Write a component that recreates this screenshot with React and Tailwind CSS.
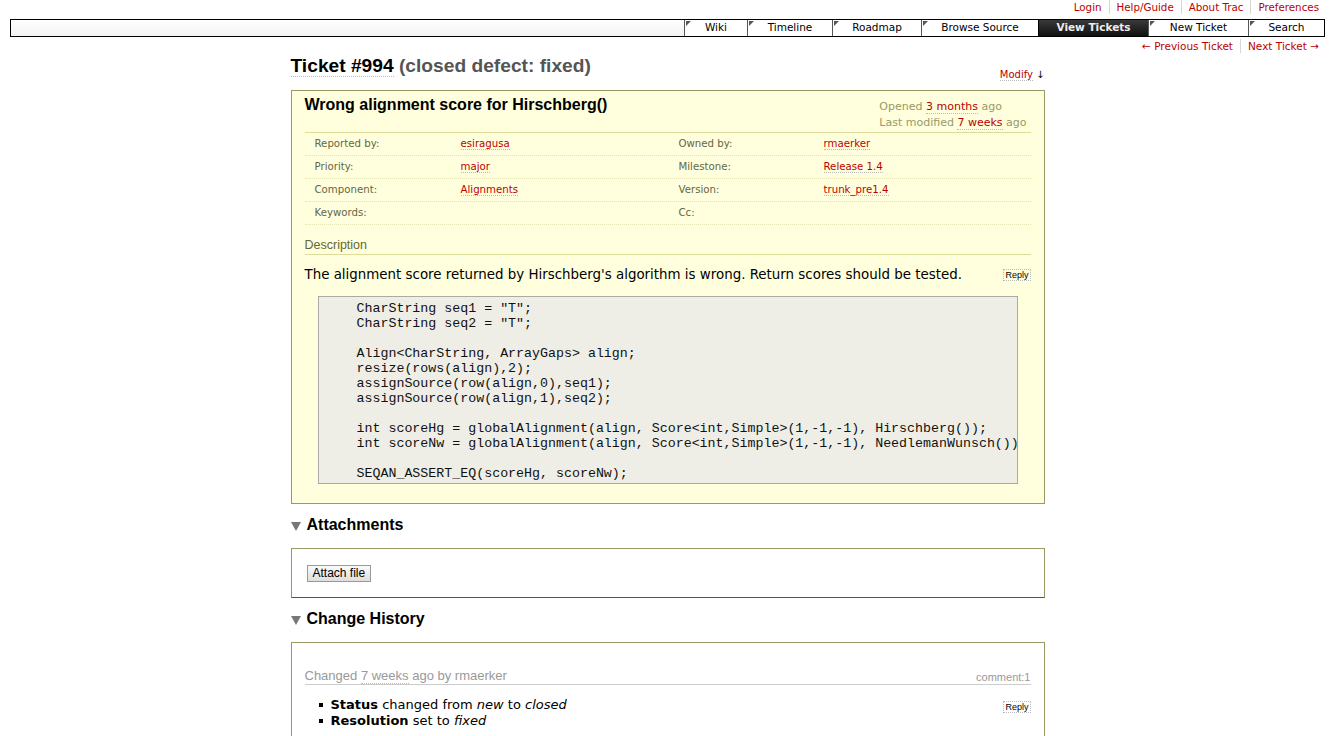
import React from "react";

const V = "font-['DejaVu_Sans',Verdana,sans-serif]";
const A = "font-['Liberation_Sans',Arial,sans-serif]";
const M = "font-['Liberation_Mono','Courier_New',monospace]";

const linkCls = "text-[#bb0000] border-b border-dotted border-[#bbb]";

function Corner() {
  return (
    <svg className="absolute left-[1px] top-[1px]" width="5" height="5" viewBox="0 0 5 5">
      <polygon points="0,0 5,0 0,5" fill="#555" />
    </svg>
  );
}

function NavItem({ label, w, active }) {
  if (active) {
    return (
      <div
        className={`relative h-full flex items-center justify-center border-l border-black bg-gradient-to-b from-[#3a3a3a] to-[#111] text-[#eee] font-bold text-[10.5px] ${V}`}
        style={{ width: w }}
      >
        {label}
      </div>
    );
  }
  return (
    <div
      className={`relative h-full flex items-center justify-center border-l border-[#555] bg-white text-black text-[10.5px] ${V}`}
      style={{ width: w }}
    >
      <Corner />
      {label}
    </div>
  );
}

function Triangle() {
  return (
    <svg width="10" height="9" viewBox="0 0 10 9" className="mr-[6px] mt-[2px]">
      <polygon points="0,0 10,0 5,9" fill="#777" />
    </svg>
  );
}

function ReplyBtn() {
  return (
    <span className={`${A} text-[9px] leading-[10px] px-[1px] border border-dotted border-[#bbb] text-black`}>
      Reply
    </span>
  );
}

const props = [
  ["Reported by:", "esiragusa", "Owned by:", "rmaerker"],
  ["Priority:", "major", "Milestone:", "Release 1.4"],
  ["Component:", "Alignments", "Version:", "trunk_pre1.4"],
  ["Keywords:", "", "Cc:", ""],
];

const code = `CharString seq1 = "T";
CharString seq2 = "T";

Align<CharString, ArrayGaps> align;
resize(rows(align),2);
assignSource(row(align,0),seq1);
assignSource(row(align,1),seq2);

int scoreHg = globalAlignment(align, Score<int,Simple>(1,-1,-1), Hirschberg());
int scoreNw = globalAlignment(align, Score<int,Simple>(1,-1,-1), NeedlemanWunsch());

SEQAN_ASSERT_EQ(scoreHg, scoreNw);`;

export default function App() {
  return (
    <div className={`min-h-[736px] bg-white text-black ${V}`}>
      {/* metanav */}
      <div className="h-[14px] flex justify-end pr-[16px] text-[10.3px] leading-[15px]">
        {["Login", "Help/Guide", "About Trac", "Preferences"].map((t, i) => (
          <span
            key={t}
            className={`${i > 0 ? "border-l border-[#d7d7d7] pl-[7px]" : ""} ${i < 3 ? "pr-[7px]" : ""}`}
          >
            <span className="text-[#bb0000]">{t}</span>
          </span>
        ))}
      </div>

      {/* mainnav */}
      <div className="mx-[10px] mt-[5px] h-[18px] border border-black bg-gradient-to-b from-white to-[#f3f3f3] flex justify-end">
        <NavItem label="Wiki" w={63} />
        <NavItem label="Timeline" w={85} />
        <NavItem label="Roadmap" w={89} />
        <NavItem label="Browse Source" w={117} />
        <NavItem label="View Tickets" w={110} active />
        <NavItem label="New Ticket" w={100} />
        <NavItem label="Search" w={76} />
      </div>

      {/* ctxtnav */}
      <div className="h-[14px] mt-[2px] flex justify-end pr-[16px] text-[10.5px] leading-[14px]">
        <span className="pr-[7px] text-[#bb0000]">← Previous Ticket</span>
        <span className="border-l border-[#d7d7d7] pl-[7px] text-[#bb0000]">Next Ticket →</span>
      </div>

      {/* content */}
      <div className="w-[754px] mx-auto">
        <div className="h-[29px] flex justify-between">
          <h1 className={`${A} mt-[1px] font-bold text-[19.2px] leading-[24px] self-start`}>
            <span className="border-b border-dotted border-[#bbb]">Ticket #994</span>{" "}
            <span className="text-[#555]">(closed defect: fixed)</span>
          </h1>
          <div className="self-end text-[10px] leading-[14px]">
            <span className="text-[#bb0000] border-b border-dotted border-[#bbb]">Modify</span>{" "}
            <span>↓</span>
          </div>
        </div>

        {/* ticket box */}
        <div className="mt-[8px] border border-[#999966] bg-[#ffffdd] px-[13px] pt-[4px] pb-[19px]">
          <div className="flex justify-between">
            <h2 className={`${A} font-bold text-[16px] leading-[20px]`}>Wrong alignment score for Hirschberg()</h2>
            <div className="mt-[4px] text-left text-[11px] leading-[16px] text-[#999966] pr-[4px]">
              <div>
                Opened <span className={linkCls}>3 months</span> ago
              </div>
              <div>
                Last modified <span className={linkCls}>7 weeks</span> ago
              </div>
            </div>
          </div>
          <div className="mt-[1px] border-t border-[#dddd99]">
            {props.map((r) => (
              <div
                key={r[0]}
                className="grid grid-cols-[146px_218px_145px_217px] h-[23px] items-center border-b border-dotted border-[#e6e6b4] text-[10.2px]"
              >
                <div className="pl-[10px] text-[#666644]">{r[0]}</div>
                <div className="pl-[10px]">{r[1] && <span className={linkCls}>{r[1]}</span>}</div>
                <div className="pl-[10px] text-[#666644]">{r[2]}</div>
                <div className="pl-[10px]">{r[3] && <span className={linkCls}>{r[3]}</span>}</div>
              </div>
            ))}
          </div>

          <h3 className={`${A} mt-[13px] text-[12.5px] leading-[14px] pb-[2px] text-[#666633] border-b border-[#dddd99]`}>
            Description
          </h3>
          <div className="mt-[12px] flex justify-between items-center h-[16px]">
            <p className="text-[13.4px] leading-[16px]">
              The alignment score returned by Hirschberg's algorithm is wrong. Return scores should be tested.
            </p>
            <ReplyBtn />
          </div>
          <pre
            className={`${M} mt-[13px] mx-[13px] h-[188px] overflow-hidden bg-[#efeee6] border border-[#aaa] pl-[38px] pt-[4px] text-[13.3px] leading-[15px] text-[#111] whitespace-pre`}
          >
            {code}
          </pre>
        </div>

        {/* Attachments */}
        <h2 className={`${A} mt-[11px] flex items-center font-bold text-[16px] leading-[20px]`}>
          <Triangle />
          Attachments
        </h2>
        <div className="mt-[13px] h-[50px] border border-[#999966] border-b-[#555533] pl-[15px] flex items-center">
          <button
            className={`h-[17px] px-[5px] border border-[#999] bg-gradient-to-b from-[#fafafa] to-[#dedede] text-[12px] leading-[15px] ${A} text-black`}
          >
            Attach file
          </button>
        </div>

        {/* Change History */}
        <h2 className={`${A} mt-[11px] flex items-center font-bold text-[16px] leading-[20px]`}>
          <Triangle />
          Change History
        </h2>
        <div className="mt-[13px] border border-[#999966] border-b-0 px-[13px] pt-[26px] h-[95px]">
          <div className={`${A} flex justify-between items-end text-[#999] border-b border-[#ccc] pb-[1px]`}>
            <span className="text-[13px] leading-[14px]">
              Changed <span className="border-b border-dotted border-[#bbb]">7 weeks</span> ago by rmaerker
            </span>
            <span className="text-[11px] leading-[12px]">comment:1</span>
          </div>
          <div className="mt-[12px] flex justify-between">
            <ul className="text-[13px] leading-[16px]">
              <li className="flex items-center">
                <span className="ml-[14px] mr-[8px] w-[4px] h-[4px] bg-black inline-block" />
                <span>
                  <b>Status</b> changed from <i>new</i> to <i>closed</i>
                </span>
              </li>
              <li className="flex items-center">
                <span className="ml-[14px] mr-[8px] w-[4px] h-[4px] bg-black inline-block" />
                <span>
                  <b>Resolution</b> set to <i>fixed</i>
                </span>
              </li>
            </ul>
            <div className="mt-[4px] flex items-start leading-none">
              <ReplyBtn />
            </div>
          </div>
        </div>
      </div>
    </div>
  );
}
